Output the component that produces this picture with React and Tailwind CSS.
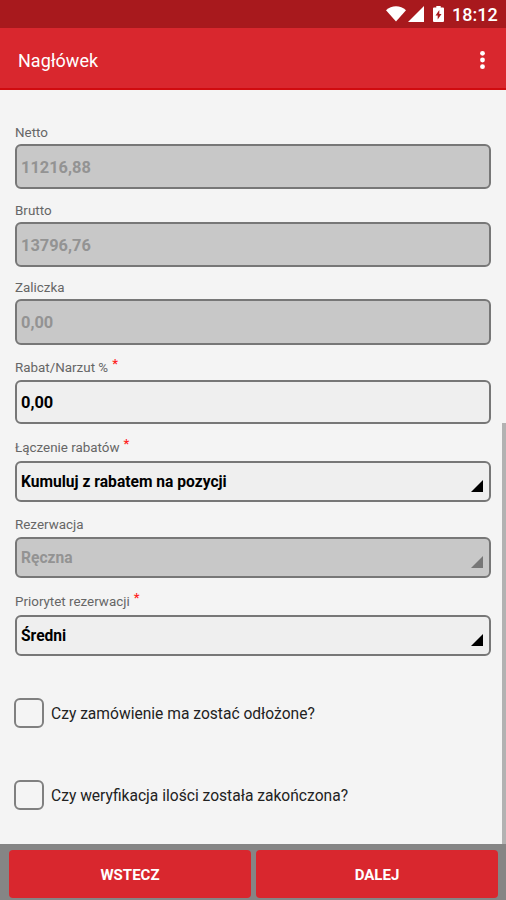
import { useState } from "react";

const fields = [
  { label: "Netto", value: "11216,88", disabled: true, labelClass: "h-[54px] pb-px", boxClass: "h-[45px]" },
  { label: "Brutto", value: "13796,76", disabled: true, labelClass: "h-[33px] pb-px", boxClass: "h-[45px]" },
  { label: "Zaliczka", value: "0,00", disabled: true, labelClass: "h-[32px] pb-px", boxClass: "h-[46px]" },
  { label: "Rabat/Narzut %", value: "0,00", required: true, labelClass: "h-[35px] pb-[2px]", boxClass: "h-[44px]" },
  { label: "Łączenie rabatów", value: "Kumuluj z rabatem na pozycji", required: true, select: true, labelClass: "h-[37px] pb-[3px]", boxClass: "h-[41px]" },
  { label: "Rezerwacja", value: "Ręczna", disabled: true, select: true, labelClass: "h-[35px] pb-[2px]", boxClass: "h-[41px]" },
  { label: "Priorytet rezerwacji", value: "Średni", required: true, select: true, labelClass: "h-[37px] pb-[3px]", boxClass: "h-[41px]" },
];

function StatusBar() {
  return (
    <div className="flex h-7 shrink-0 items-center justify-end bg-[#a8191d] pr-[8px] text-white">
      <svg width="20" height="16" viewBox="0 0 20 16" fill="currentColor">
        <path d="M0 4.2C5.5-1 14.5-1 20 4.2L10 15.6z" />
      </svg>
      <svg className="ml-[2px]" width="16" height="16" viewBox="0 0 16 16" fill="currentColor">
        <path d="M16 0v16H0z" />
      </svg>
      <svg className="ml-[9px]" width="11" height="16" viewBox="0 0 11 16">
        <path d="M3.3 0h4.4v1.5H10a1 1 0 0 1 1 1V15a1 1 0 0 1-1 1H1a1 1 0 0 1-1-1V2.5a1 1 0 0 1 1-1h2.3z" fill="currentColor" />
        <path d="M6.3 4L2.5 9.6h2.2V13.5L8.5 8H6.3z" fill="#a8191d" />
      </svg>
      <span className="ml-[8px] mt-px w-[46px] whitespace-nowrap text-[18px] font-medium leading-none">
        18:12
      </span>
    </div>
  );
}

function Field({ field }) {
  const { label, value, disabled, required, select, labelClass, boxClass } = field;
  return (
    <div>
      <div className={`flex items-end text-[13.4px] leading-5 text-[#666] ${labelClass}`}>
        <span>{label}</span>
        {required && <span className="mb-[4px] ml-[4px] text-[13px] font-medium text-[#f22]">*</span>}
      </div>
      <div
        className={`flex items-center justify-between rounded-[6px] border-2 border-[#777] pl-[4px] pr-[6px] font-bold ${boxClass} ${
          select ? "text-[15.6px]" : "text-[16.4px]"
        } ${disabled ? "bg-[#c8c8c8] text-[#939393]" : "bg-[#efefef] text-black"}`}
      >
        <span className="pt-[3px]">{value}</span>
        {select && (
          <svg
            className={`mt-[9px] ${disabled ? "text-[#777]" : "text-black"}`}
            width="12"
            height="12"
            viewBox="0 0 12 12"
            fill="currentColor"
          >
            <path d="M12 0v12H0z" />
          </svg>
        )}
      </div>
    </div>
  );
}

function CheckRow({ text }) {
  const [checked, setChecked] = useState(false);
  return (
    <label className="-ml-px flex h-[30px] items-center text-[15.6px] text-[#222]">
      <input
        type="checkbox"
        checked={checked}
        onChange={() => setChecked(!checked)}
        className="size-[30px] appearance-none rounded-[6px] border-2 border-[#808080] checked:bg-[#d9272e]"
      />
      <span className="ml-[7px] pt-[4px]">{text}</span>
    </label>
  );
}

export default function App() {
  return (
    <div className="flex h-[900px] w-[506px] flex-col overflow-hidden bg-[#f4f4f4] font-['Roboto',sans-serif]">
      <StatusBar />
      <header className="flex h-[62px] shrink-0 items-center justify-between border-b-2 border-[#d00b0f] bg-[#d9272e] pl-[18px] pr-[21px] text-white">
        <h1 className="mt-[4px] text-[18px]">Nagłówek</h1>
        <svg className="mt-[3px]" width="5" height="20" viewBox="0 0 5 20" fill="currentColor">
          <circle cx="2.5" cy="3.3" r="2.4" />
          <circle cx="2.5" cy="10" r="2.4" />
          <circle cx="2.5" cy="16.7" r="2.4" />
        </svg>
      </header>

      <main className="flex min-h-0 flex-1 justify-between">
        <div className="w-[491px] pl-[15px]">
          {fields.map((field) => (
            <Field key={field.label} field={field} />
          ))}
          <div className="mt-[42px] flex flex-col gap-[52px]">
            <CheckRow text="Czy zamówienie ma zostać odłożone?" />
            <CheckRow text="Czy weryfikacja ilości została zakończona?" />
          </div>
        </div>
        {/* Scrollbar */}
        <div className="mt-[333px] w-1 bg-[#b2b2b2]" />
      </main>

      <footer className="flex h-14 shrink-0 gap-[5px] bg-[#858585] pb-[2px] pl-[9px] pr-[8px] pt-[6px] text-[15px] font-bold text-white">
        <button className="flex-1 rounded-[4px] bg-[#d9272e] pt-[2px]">WSTECZ</button>
        <button className="flex-1 rounded-[4px] bg-[#d9272e] pt-[2px]">DALEJ</button>
      </footer>
    </div>
  );
}
